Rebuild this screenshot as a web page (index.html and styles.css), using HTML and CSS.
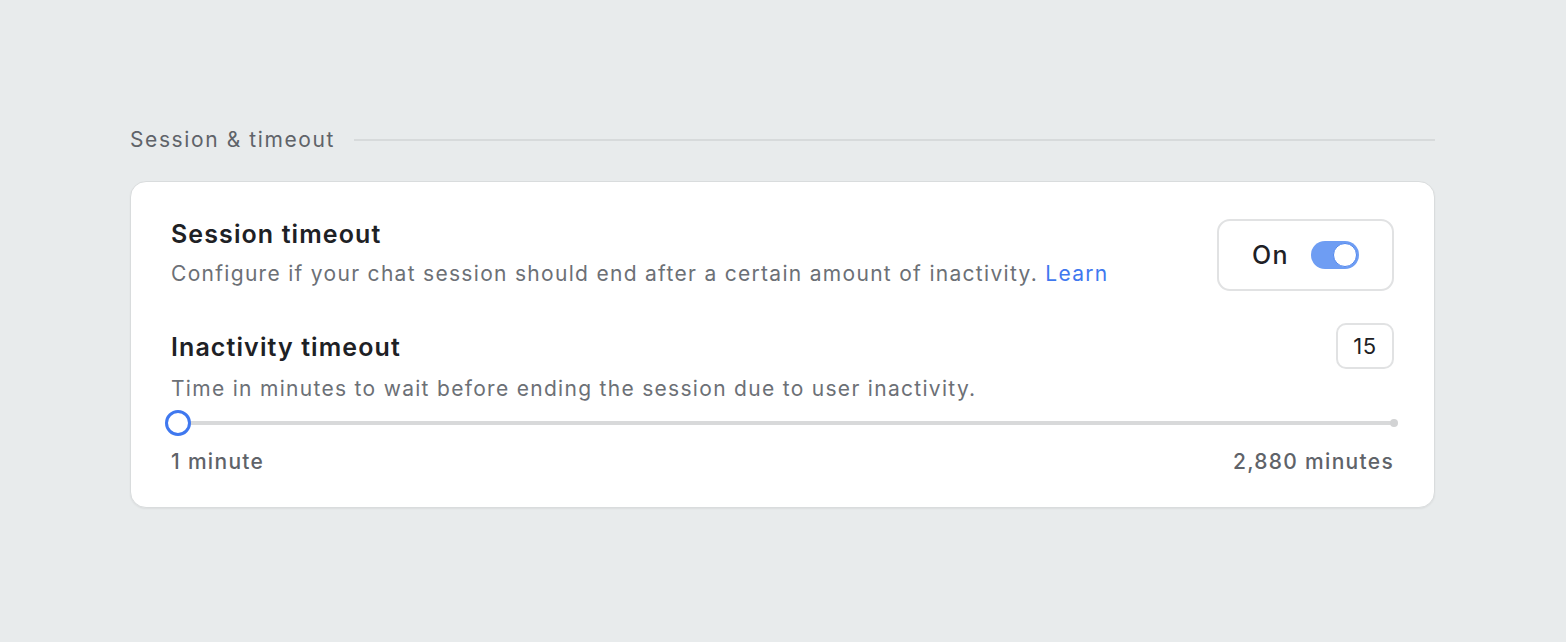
FILE: index.html
```html
<!DOCTYPE html>
<html lang="en">
<head>
    <meta charset="UTF-8">
    <meta name="viewport" content="width=device-width, initial-scale=1.0">
    <title>Session &amp; timeout</title>
    <link rel="stylesheet" href="styles.css">
</head>
<body>
    <div class="page">
        <div class="section-head">
            <span class="section-title">Session &amp; timeout</span>
            <span class="section-rule"></span>
        </div>
        <div class="card">
            <div class="setting-row">
                <div class="setting-text">
                    <h2>Session timeout</h2>
                    <p>Configure if your chat session should end after a certain amount of inactivity. <a href="#">Learn</a></p>
                </div>
                <label class="toggle-box">
                    <span class="toggle-label">On</span>
                    <span class="switch"><span class="knob"></span></span>
                </label>
            </div>
            <div class="setting-row slider-head">
                <div class="setting-text">
                    <h2>Inactivity timeout</h2>
                    <p>Time in minutes to wait before ending the session due to user inactivity.</p>
                </div>
                <div class="value-box">15</div>
            </div>
            <div class="slider">
                <span class="slider-thumb"></span>
                <span class="slider-track"></span>
                <span class="slider-end"></span>
            </div>
            <div class="slider-labels">
                <span>1 minute</span>
                <span>2,880 minutes</span>
            </div>
        </div>
    </div>
</body>
</html>
```

FILE: styles.css
```css
* {
    margin: 0;
    padding: 0;
    box-sizing: border-box;
}

:root {
    --bg: #e8ebec;
    --card: #ffffff;
    --text-primary: #1e2125;
    --text-secondary: #6c7076;
    --text-muted: #5f6369;
    --line: #d5d8da;
    --blue: #3f78ef;
    --blue-light: #6e9df3;
}

body {
    font-family: 'Inter', 'Noto Sans', sans-serif;
    background: var(--bg);
    color: var(--text-primary);
    min-height: 100vh;
}

.page {
    padding: 124px 131px 0 130px;
}

.section-head {
    display: flex;
    align-items: center;
    gap: 19px;
    height: 30px;
}

.section-title {
    font-size: 21px;
    color: var(--text-muted);
    letter-spacing: 1.6px;
}

.section-rule {
    flex: 1;
    height: 2px;
    background: #d7dadb;
    margin-top: 2px;
}

.card {
    margin-top: 27px;
    background: var(--card);
    border: 1px solid #d9dcdd;
    border-radius: 16px;
    box-shadow: 0 1px 2px rgba(0, 0, 0, 0.06);
    padding: 37px 40px 31px 40px;
}

.setting-row {
    display: flex;
    justify-content: space-between;
    align-items: flex-start;
}

.setting-text h2 {
    font-size: 25px;
    font-weight: 600;
    color: var(--text-primary);
    line-height: 30px;
    letter-spacing: 1.1px;
}

.setting-text p {
    font-size: 21px;
    color: var(--text-secondary);
    line-height: 28px;
    margin-top: 11px;
    letter-spacing: 1.3px;
}

.setting-text a {
    color: var(--blue);
    text-decoration: none;
}

.toggle-box {
    width: 177px;
    height: 72px;
    border: 2px solid #e1e2e3;
    border-radius: 13px;
    display: flex;
    align-items: center;
    justify-content: center;
    gap: 22px;
    cursor: pointer;
}

.toggle-label {
    font-size: 25px;
    font-weight: 500;
    color: var(--text-primary);
    letter-spacing: 1.5px;
}

.switch {
    width: 48px;
    height: 28px;
    border-radius: 14px;
    background: var(--blue-light);
    display: flex;
    align-items: center;
    justify-content: flex-end;
    padding: 0 2px;
}

.knob {
    width: 24px;
    height: 24px;
    border-radius: 50%;
    background: #ffffff;
    border: 1px solid #4f86ee;
}

.slider-head {
    margin-top: 32px;
}

.slider-head .setting-text h2 {
    margin-top: 9px;
}

.slider-head .setting-text p {
    margin-top: 13px;
}

.value-box {
    width: 58px;
    height: 46px;
    border: 2px solid #e1e2e3;
    border-radius: 10px;
    display: flex;
    align-items: center;
    justify-content: center;
    font-size: 22px;
    color: var(--text-primary);
    letter-spacing: 0.5px;
}

.slider {
    position: relative;
    display: flex;
    align-items: center;
    height: 26px;
    margin-top: 7px;
    margin-left: -6px;
    margin-right: -4px;
}

.slider-thumb {
    position: absolute;
    left: 0;
    top: 0;
    width: 26px;
    height: 26px;
    border-radius: 50%;
    background: #ffffff;
    border: 3px solid var(--blue);
}

.slider-track {
    flex: 1;
    height: 4px;
    margin-left: 12px;
    border-radius: 2px;
    background: #d8d9da;
}

.slider-end {
    width: 8px;
    height: 8px;
    border-radius: 50%;
    background: #d2d3d4;
    margin-left: -2px;
}

.slider-labels {
    display: flex;
    justify-content: space-between;
    margin-top: 12px;
    font-size: 21px;
    font-weight: 500;
    color: var(--text-muted);
    line-height: 28px;
    letter-spacing: 1.3px;
}
```
